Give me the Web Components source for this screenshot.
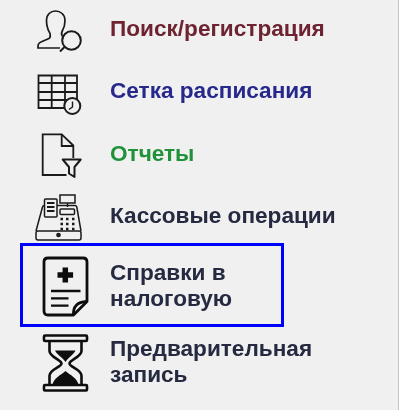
<!DOCTYPE html>
<html>
<head>
<meta charset="utf-8">
<style>
html, body { margin: 0; padding: 0; background: #f0f0f0; overflow: hidden; }
</style>
</head>
<body>
<side-menu>
    <menu-row color="#6e2430" icon="search" cy="29">Поиск/регистрация</menu-row>
    <menu-row color="#27288c" icon="grid" cy="91">Сетка расписания</menu-row>
    <menu-row color="#1f9138" icon="report" cy="154">Отчеты</menu-row>
    <menu-row color="#252a40" icon="cash" cy="216">Кассовые операции</menu-row>
    <menu-row color="#252a40" icon="cert" cy="286" selected>Справки в<br>налоговую</menu-row>
    <menu-row color="#252a40" icon="sand" cy="362">Предварительная<br>запись</menu-row>
</side-menu>
<script>
// paths are written in page coordinates, each svg picks its part through viewBox
const ICONS = {
    search: `<g stroke-width="1.7">
        <path d="M60 48H38v-2c0-2 1.500-3.500 4-4.500l7-3c1.500-.8 1.500-3 1-5-.5-1.500-2-3-2.500-6-.8-2-1-4-1-7 0-6 4-9.500 9-9.500s9.500 3.500 9.500 9.500c0 4-.8 7-2.500 10-1 2-1.500 3.500-.5 5l1 1"/>
        <circle cx="71.500" cy="40.500" r="9.300" stroke-width="2"/>
        <path d="M64.500 47l-4.500 4.500" stroke-width="2"/>
    </g>`,
    grid: `<g stroke-width="1.800">
        <path d="M38.500 75.500H77V108H38.500z"/>
        <path d="M38.500 83h38.500M38.500 92h38.500M38.500 100h38.500M51.700 75.500V108M65 75.500V108"/>
        <circle cx="72.300" cy="106" r="8" fill="#f0f0f0" stroke-width="2"/>
        <path d="M72.500 101.500v5.500l-3.500 2.500" stroke-width="1.400"/>
    </g>`,
    report: `<g stroke-width="1.800">
        <path d="M66.500 175H42.700V134.300H61.700L73.300 145.500V158"/>
        <path d="M61.700 134.300V146H73.300"/>
        <path d="M62.700 159.500H80.700L74.500 167V177L69 173.500V167z" stroke-linejoin="round" stroke-width="2"/>
    </g>`,
    cash: `<g stroke-width="1.500">
        <rect x="60" y="195" width="15" height="8"/>
        <path d="M67.500 203v4M57 205.500h18c1 0 1.500.5 1.800 1.500L81 231M44.500 205.500c-1 0-1.800.5-2 1.500L36 231"/>
        <rect x="44.500" y="199" width="12.500" height="18" rx="1"/>
        <path d="M47 203h7.500M47 207h7.500M47 211h7.500" stroke-width="2"/>
        <rect x="60" y="209" width="14.500" height="5.500" rx="1"/>
        <path d="M60.500 219h2.500M66 219h2.500M72 219h2.500M60.500 224h2.500M66 224h2.500M72 224h2.500M60.500 229h2.500M66 229h2.500M72 229h2.500" stroke-width="2.400"/>
        <rect x="36" y="231" width="45" height="9" rx="2"/>
        <circle cx="58.500" cy="235" r="1.600" fill="#222"/>
    </g>`,
    cert: `<g stroke="#0d0d0d" stroke-width="2.800" stroke-linejoin="round">
        <path d="M73.500 315H48c-2.500 0-4-1.500-4-4V262c0-2.500 1.500-4 4-4h35c2.500 0 4 1.500 4 4v39.500z"/>
        <path d="M73.500 315c-.5-8 3-13 13.500-13.500" />
        <path d="M57.500 275h15.600M65.300 267.500v15" stroke-width="5.500"/>
        <path d="M51 291h29.500M51 298.300h17.500M51 305.700h17.500" stroke-width="2.300"/>
    </g>`,
    sand: `<g stroke="#0d0d0d" stroke-width="2.600">
        <rect x="44" y="335.500" width="43" height="5.500" rx="1"/>
        <rect x="44" y="385" width="43" height="5.500" rx="1"/>
        <path d="M49.500 341v10c0 6 12 9 12 12.500s-12 6-12 12V385M81.500 341v10c0 6-12 9-12 12.500s12 6 12 12V385"/>
        <path d="M55 350.500h20.500c-1.500 3.500-7 7-10 11.500-3-4.500-9-8-10.500-11.500z" fill="#0d0d0d" stroke="none"/>
        <path d="M52.500 385c1-7 8.500-10 13-14 4.500 4 12 7 13 14z" fill="#0d0d0d" stroke="none"/>
    </g>`
}

class sideMenu extends HTMLElement {
    constructor() {
        super()
        const root = this.attachShadow({ mode: 'open' })
        root.innerHTML = `<style>
            :host {
                display: grid;
                grid-template-rows: 62px 63px 62px 53px 93px 52px;
                box-sizing: border-box;
                width: 400px;
                height: 410px;
                padding: 3px 0 0 20px;
                background: linear-gradient(to left, #fff 1px, #c6c6c6 1px 2px, transparent 2px);
            }
        </style><slot></slot>`
    }
}

class menuRow extends HTMLElement {
    constructor() {
        super()
        const root = this.attachShadow({ mode: 'open' })
        const cy = parseInt(this.getAttribute('cy'), 10)
        const icon = ICONS[this.getAttribute('icon')]
        root.innerHTML = `<style>
            :host { display: block; }
            .row {
                display: flex;
                align-items: center;
                box-sizing: border-box;
                height: 52px;
                border: 3px solid transparent;
                white-space: nowrap;
                color: ${this.getAttribute('color')};
                font: bold 22.6px/26px "Liberation Sans", Arial, sans-serif;
            }
            :host([selected]) .row { width: 264px; height: 84px; padding-top: 2px; border-color: #00f; }
            svg { flex: none; display: block; margin: -4px 0; overflow: visible; fill: none; stroke: #1a1a1a; filter: blur(.35px); }
            span { filter: blur(.3px); }
        </style>
        <div class="row">
            <svg width="87" height="60" viewBox="23 ${cy - 30} 87 60">${icon}</svg>
            <span><slot></slot></span>
        </div>`
    }
}

customElements.define('side-menu', sideMenu)
customElements.define('menu-row', menuRow)
</script>
</body>
</html>
